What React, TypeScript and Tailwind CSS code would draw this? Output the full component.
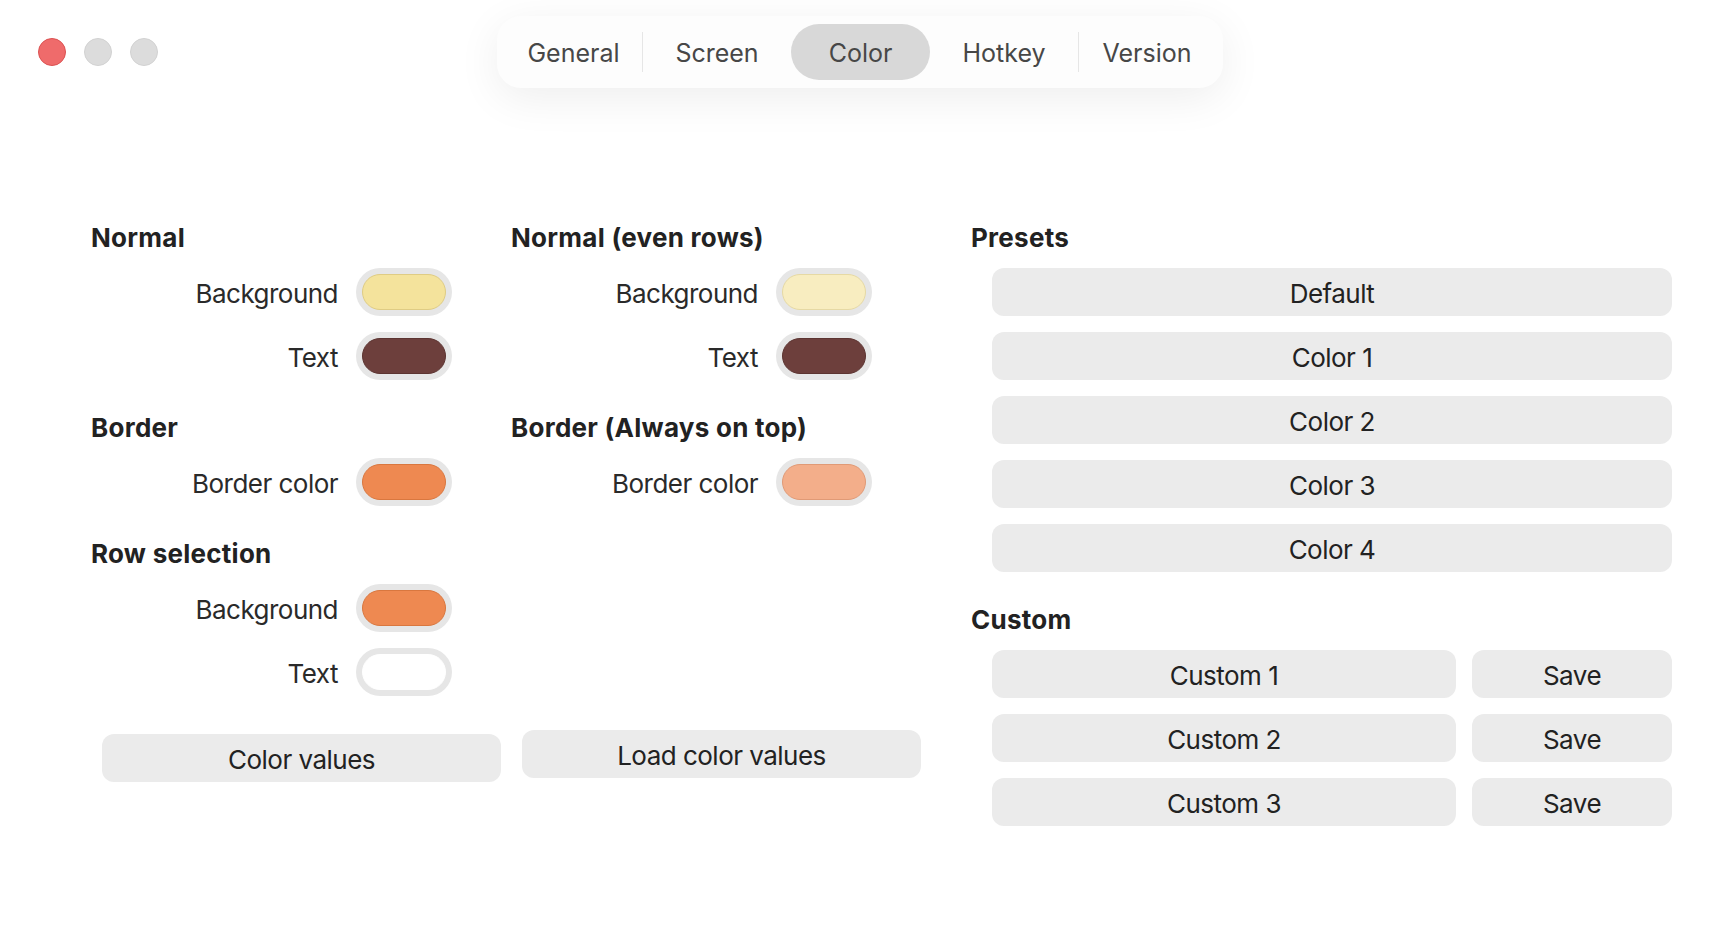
import React from "react";

type Swatch = { label: string; fill: string };
type Section = { title: string; rows: Swatch[] };

const tabs = [
  { name: "General", w: "w-[137px]" },
  { name: "Screen", w: "w-[148px]" },
  { name: "Color", w: "w-[139px]" },
  { name: "Hotkey", w: "w-[148px]" },
  { name: "Version", w: "w-[136px]" },
];

const leftSections: Section[] = [
  {
    title: "Normal",
    rows: [
      { label: "Background", fill: "bg-[#f4e39c] border-[#dfcc84]" },
      { label: "Text", fill: "bg-[#6d3f3c] border-[#5c3431]" },
    ],
  },
  {
    title: "Border",
    rows: [{ label: "Border color", fill: "bg-[#ee8951] border-[#d9773f]" }],
  },
  {
    title: "Row selection",
    rows: [
      { label: "Background", fill: "bg-[#ee8951] border-[#d9773f]" },
      { label: "Text", fill: "bg-white border-white" },
    ],
  },
];

const midSections: Section[] = [
  {
    title: "Normal (even rows)",
    rows: [
      { label: "Background", fill: "bg-[#f8edc0] border-[#e6d9a4]" },
      { label: "Text", fill: "bg-[#6d3f3c] border-[#5c3431]" },
    ],
  },
  {
    title: "Border (Always on top)",
    rows: [{ label: "Border color", fill: "bg-[#f3ae8a] border-[#e09a76]" }],
  },
];

function Heading({ children }: { children: React.ReactNode }) {
  return (
    <h3 className="h-8 text-[26px] font-bold leading-8 tracking-[0.01em] text-[#222]">{children}</h3>
  );
}

function Column({ sections }: { sections: Section[] }) {
  return (
    <div className="flex w-[420px] flex-col gap-8">
      {sections.map((s) => (
        <div key={s.title}>
          <Heading>{s.title}</Heading>
          <div className="mt-[14px] flex flex-col gap-4">
            {s.rows.map((r) => (
              <div key={r.label} className="flex items-center">
                <span className="w-[247px] pt-[3px] text-right text-[26px] leading-8 tracking-[-0.02em] text-[#2a2a2a]">
                  {r.label}
                </span>
                <div className="ml-[18px] flex h-12 w-24 items-center rounded-full bg-[#e6e6e6] p-[6px]">
                  <div className={`h-full w-full rounded-full border ${r.fill}`} />
                </div>
              </div>
            ))}
          </div>
        </div>
      ))}
    </div>
  );
}

function Btn({ children, className = "" }: { children: React.ReactNode; className?: string }) {
  return (
    <button
      type="button"
      className={`flex h-12 items-center justify-center rounded-[12px] bg-[#ebebeb] pt-[3px] text-[26px] tracking-[-0.02em] text-[#222] ${className}`}
    >
      {children}
    </button>
  );
}

export default function App() {
  return (
    <div className="min-h-[944px] w-full bg-white font-['Inter','Noto_Sans',sans-serif] antialiased">
      {/* title bar */}
      <div className="grid grid-cols-[1fr_auto_1fr] items-center pt-4">
        <div className="flex items-center gap-[18px] pl-[38px]">
          <span className="h-7 w-7 rounded-full border border-[#dc5252] bg-[#ef6b6b]" />
          <span className="h-7 w-7 rounded-full border border-[#d2d2d2] bg-[#dcdcdc]" />
          <span className="h-7 w-7 rounded-full border border-[#d2d2d2] bg-[#dcdcdc]" />
        </div>
        <div className="flex h-[72px] items-center rounded-[24px] bg-[#fdfdfd] px-2 shadow-[0_10px_44px_rgba(0,0,0,0.07)]">
          {tabs.map((t, i) => (
            <React.Fragment key={t.name}>
              {(i === 1 || i === 4) && <span className="h-10 w-px bg-[#e6e6e6]" />}
              <div
                className={`flex h-14 ${t.w} items-center justify-center rounded-full pt-1 text-[25px] text-[#474747] ${
                  t.name === "Color" ? "bg-[#d8d8d8]" : ""
                }`}
              >
                {t.name}
              </div>
            </React.Fragment>
          ))}
        </div>
        <div />
      </div>

      {/* content */}
      <div className="mt-[134px] flex pl-[91px]">
        <div className="flex w-[840px] flex-col">
          <div className="flex">
            <Column sections={leftSections} />
            <Column sections={midSections} />
          </div>
          <div className="mt-[34px] flex items-start gap-[21px] pl-[11px]">
            <Btn className="mt-1 w-[399px]">Color values</Btn>
            <Btn className="w-[399px]">Load color values</Btn>
          </div>
        </div>

        <div className="ml-[40px] flex w-[701px] flex-col">
          <Heading>Presets</Heading>
          <div className="mt-[14px] flex flex-col gap-4 pl-[21px]">
            {["Default", "Color 1", "Color 2", "Color 3", "Color 4"].map((p) => (
              <Btn key={p} className="w-[680px]">
                {p}
              </Btn>
            ))}
          </div>
          <div className="mt-8">
            <Heading>Custom</Heading>
          </div>
          <div className="mt-[14px] flex flex-col gap-4 pl-[21px]">
            {["Custom 1", "Custom 2", "Custom 3"].map((c) => (
              <div key={c} className="flex gap-4">
                <Btn className="w-[464px]">{c}</Btn>
                <Btn className="w-[200px]">Save</Btn>
              </div>
            ))}
          </div>
        </div>
      </div>
    </div>
  );
}
